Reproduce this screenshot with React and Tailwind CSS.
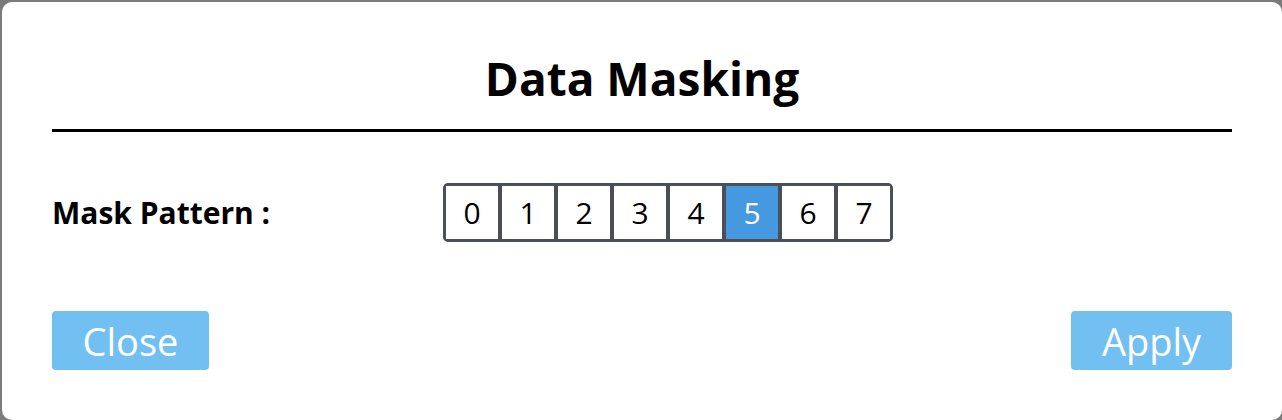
const PATTERNS = [0, 1, 2, 3, 4, 5, 6, 7]

export default function App() {
  const selected = 5

  return (
    <div className="w-[1282px] h-[420px] bg-[#7b7b7b] pt-[2px] pl-[2px] overflow-hidden" style={{ fontFamily: '"Open Sans", sans-serif' }}>
      <div className="w-[1280px] h-[418px] bg-white rounded-[10px] px-[50px] pt-[53px] flex flex-col">
        <h1 className="text-[46px] leading-none font-bold text-black text-center h-[46px]">Data Masking</h1>
        <div className="mt-[28px] h-[3px] bg-black" />

        {/* pattern row */}
        <div className="mt-[51px] flex items-center">
          <span className="w-[391px] text-[30px] font-bold text-black leading-none">Mask Pattern :</span>
          <div className="flex gap-[4px] bg-[#4a4f58] border-[3px] border-[#4a4f58] rounded-[5px]">
            {PATTERNS.map(n => (
              <div
                key={n}
                className={`w-[52px] h-[53px] flex items-center justify-center text-[30px] ${n === selected ? 'bg-[#4599e0] text-white' : 'bg-white text-black'}`}
              >
                {n}
              </div>
            ))}
          </div>
        </div>

        {/* actions */}
        <div className="mt-[69px] flex justify-between">
          <button className="w-[157px] h-[59px] rounded-[4px] bg-[#72c0f1] text-white text-[38px] leading-none">Close</button>
          <button className="w-[161px] h-[59px] rounded-[4px] bg-[#72c0f1] text-white text-[38px] leading-none">Apply</button>
        </div>
      </div>
    </div>
  )
}
